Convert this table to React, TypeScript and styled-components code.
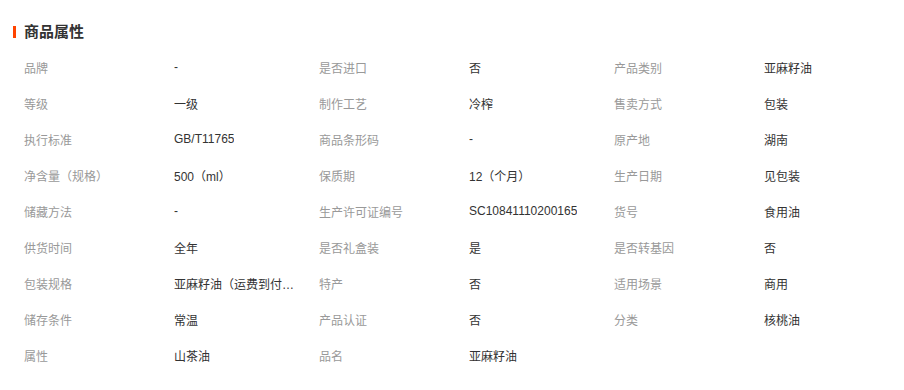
import styled, { createGlobalStyle } from "styled-components"

const GlobalStyle = createGlobalStyle`
    body {
        margin: 0;
        background: #fff;
        font-family: "Liberation Sans", "Noto Sans CJK SC", sans-serif;
    }
`

type Attr = { label: string; value: string }

const attrs: Attr[] = [
    { label: "品牌", value: "-" },
    { label: "是否进口", value: "否" },
    { label: "产品类别", value: "亚麻籽油" },
    { label: "等级", value: "一级" },
    { label: "制作工艺", value: "冷榨" },
    { label: "售卖方式", value: "包装" },
    { label: "执行标准", value: "GB/T11765" },
    { label: "商品条形码", value: "-" },
    { label: "原产地", value: "湖南" },
    { label: "净含量（规格）", value: "500（ml）" },
    { label: "保质期", value: "12（个月）" },
    { label: "生产日期", value: "见包装" },
    { label: "储藏方法", value: "-" },
    { label: "生产许可证编号", value: "SC10841110200165" },
    { label: "货号", value: "食用油" },
    { label: "供货时间", value: "全年" },
    { label: "是否礼盒装", value: "是" },
    { label: "是否转基因", value: "否" },
    { label: "包装规格", value: "亚麻籽油（运费到付款）" },
    { label: "特产", value: "否" },
    { label: "适用场景", value: "商用" },
    { label: "储存条件", value: "常温" },
    { label: "产品认证", value: "否" },
    { label: "分类", value: "核桃油" },
    { label: "属性", value: "山茶油" },
    { label: "品名", value: "亚麻籽油" },
]

export default function App() {
    return (
        <>
            <GlobalStyle/>
            <Page>
                <Title>商品属性</Title>
                <Grid>
                    {attrs.map((a, i) => (
                        <Item key={i}>
                            <Label>{a.label}</Label>
                            <Value title={a.value}>{a.value}</Value>
                        </Item>
                    ))}
                </Grid>
            </Page>
        </>
    )
}

const Page = styled.div`
    width: 904px;
    padding-top: 20px;
`
const Title = styled.h3`
    margin: 6px 0 11px 13px;
    padding-left: 8px;
    border-left: 3px solid #ff4400;
    height: 12px;
    line-height: 12px;
    font-size: 15px;
    font-weight: bold;
    color: #333;
`
const Grid = styled.div`
    display: grid;
    grid-template-columns: repeat(3, 295px);
    grid-auto-rows: 36px;
    padding-left: 24px;
`
const Item = styled.div`
    display: flex;
    align-items: center;
    font-size: 12px;
`
const Label = styled.span`
    width: 150px;
    flex: none;
    color: #999;
`
const Value = styled.span`
    max-width: 121px;
    color: #333;
    white-space: nowrap;
    overflow: hidden;
    text-overflow: ellipsis;
`
